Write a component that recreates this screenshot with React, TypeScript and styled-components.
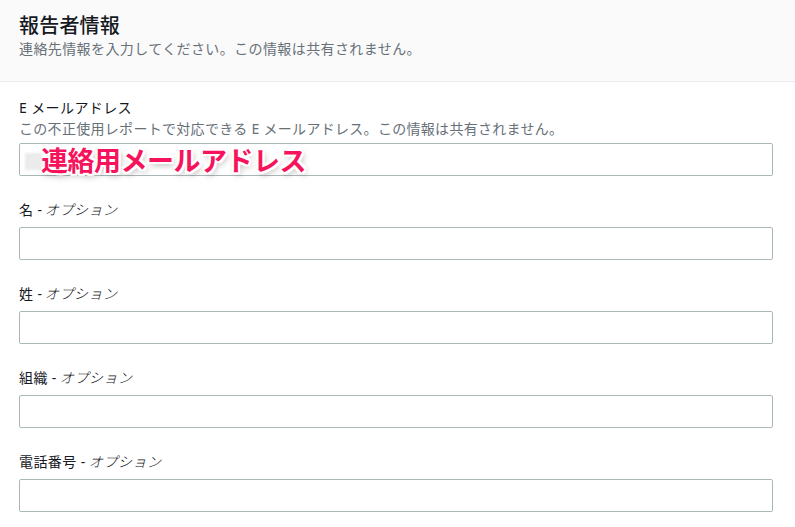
import styled, { createGlobalStyle } from "styled-components";

const GlobalStyle = createGlobalStyle`
  html, body {
    margin: 0;
    padding: 0;
    background: #ffffff;
  }
  body {
    font-family: "Noto Sans", "Noto Sans CJK JP", sans-serif;
    color: #16191f;
  }
`;

const Page = styled.div`
  width: 795px;
  height: 527px;
  overflow: hidden;
  background: #ffffff;
`;

const Header = styled.header`
  background: #fafafa;
  border-bottom: 1px solid #eaeded;
  padding: 13px 21px 22px 19px;
`;

const Title = styled.h2`
  margin: 0;
  font-size: 20px;
  line-height: 26px;
  font-weight: 500;
  letter-spacing: 0.2px;
  color: #16191f;
`;

const Subtitle = styled.p`
  margin: 0;
  font-size: 14px;
  line-height: 20px;
  letter-spacing: 0.4px;
  color: #687078;
`;

const Form = styled.div`
  display: flex;
  flex-direction: column;
  gap: 23px;
  padding: 15px 22px 0 19px;
`;

const Field = styled.div`
  position: relative;
  display: flex;
  flex-direction: column;
`;

const Label = styled.label`
  height: 22px;
  font-size: 14px;
  line-height: 22px;
  letter-spacing: 0.4px;
  color: #16191f;
`;

// the CJK font has no italic face, so slant it by hand
const Optional = styled.span`
  display: inline-block;
  font-weight: 300;
  color: #0f1217;
  letter-spacing: 0.6px;
  transform: skewX(-15deg);
`;

const Hint = styled.div`
  font-size: 14px;
  line-height: 20px;
  letter-spacing: 0.3px;
  color: #687078;
`;

const Input = styled.input<{ $hasHint?: boolean }>`
  box-sizing: border-box;
  width: 100%;
  height: 33px;
  margin-top: ${(p) => (p.$hasHint ? "4px" : "6px")};
  border: 1px solid #aab7b8;
  border-radius: 2px;
  background: #ffffff;
  font: inherit;
  padding: 4px 10px;
  outline: none;
`;

const Annotation = styled.div`
  position: absolute;
  left: 0;
  top: 46px;
  height: 33px;
  display: flex;
  align-items: center;
  pointer-events: none;
`;

const Smudge = styled.span`
  width: 17px;
  height: 17px;
  margin: 3px 0 0 6px;
  background: #ebebeb;
  filter: blur(1px);
`;

const Callout = styled.span`
  margin-left: -1px;
  font-family: "Noto Sans CJK JP", sans-serif;
  font-size: 27px;
  font-weight: 700;
  line-height: 33px;
  color: #f7135c;
  letter-spacing: -0.5px;
  text-shadow:
    2px 0 0 #fff, -2px 0 0 #fff, 0 2px 0 #fff, 0 -2px 0 #fff,
    2px 2px 0 #fff, -2px -2px 0 #fff, 2px -2px 0 #fff, -2px 2px 0 #fff,
    2px 3px 6px rgba(0, 0, 0, 0.35);
`;

const optionalFields = ["名", "姓", "組織", "電話番号"];

const App = () => {
  return (
    <Page>
      <GlobalStyle />
      <Header>
        <Title>報告者情報</Title>
        <Subtitle>
          連絡先情報を入力してください。この情報は共有されません。
        </Subtitle>
      </Header>
      <Form>
        <Field>
          <Label>E メールアドレス</Label>
          <Hint>
            この不正使用レポートで対応できる E
            メールアドレス。この情報は共有されません。
          </Hint>
          <Input $hasHint />
          <Annotation>
            <Smudge />
            <Callout>連絡用メールアドレス</Callout>
          </Annotation>
        </Field>
        {optionalFields.map((name) => (
          <Field key={name}>
            <Label>
              {name} - <Optional>オプション</Optional>
            </Label>
            <Input />
          </Field>
        ))}
      </Form>
    </Page>
  );
};

export default App;
